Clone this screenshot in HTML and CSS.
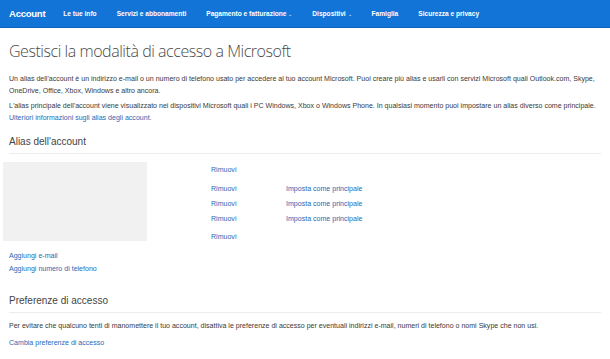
FILE: index.html
```html
<!DOCTYPE html>
<html lang="it">
<head>
<meta charset="utf-8">
<title>Account Microsoft</title>
<link rel="stylesheet" href="styles.css">
</head>
<body>
<header class="topbar">
  <span class="brand">Account</span>
  <nav class="nav">
    <a class="nav-item">Le tue info</a>
    <a class="nav-item">Servizi e abbonamenti</a>
    <a class="nav-item">Pagamento e fatturazione <span class="caret">⌄</span></a>
    <a class="nav-item">Dispositivi <span class="caret">⌄</span></a>
    <a class="nav-item">Famiglia</a>
    <a class="nav-item">Sicurezza e privacy</a>
  </nav>
</header>
<main class="content">
  <h1 class="title">Gestisci la modalità di accesso a Microsoft</h1>
  <p class="text">Un alias dell'account è un indirizzo e-mail o un numero di telefono usato per accedere al tuo account Microsoft. Puoi creare più alias e usarli con servizi Microsoft quali Outlook.com, Skype, OneDrive, Office, Xbox, Windows e altro ancora.</p>
  <p class="text">L'alias principale dell'account viene visualizzato nei dispositivi Microsoft quali i PC Windows, Xbox o Windows Phone. In qualsiasi momento puoi impostare un alias diverso come principale.<br><a class="link">Ulteriori informazioni sugli alias degli account.</a></p>

  <h2 class="section-title first">Alias dell'account</h2>
  <div class="alias-area">
    <div class="alias-box"></div>
    <div class="alias-actions">
      <div class="action-row top"><a class="link">Rimuovi</a></div>
      <div class="action-row"><a class="link">Rimuovi</a><a class="link">Imposta come principale</a></div>
      <div class="action-row"><a class="link">Rimuovi</a><a class="link">Imposta come principale</a></div>
      <div class="action-row"><a class="link">Rimuovi</a><a class="link">Imposta come principale</a></div>
      <div class="action-row bottom"><a class="link">Rimuovi</a></div>
    </div>
  </div>
  <div class="add-links">
    <a class="link">Aggiungi e-mail</a>
    <a class="link">Aggiungi numero di telefono</a>
  </div>

  <h2 class="section-title">Preferenze di accesso</h2>
  <p class="text">Per evitare che qualcuno tenti di manomettere il tuo account, disattiva le preferenze di accesso per eventuali indirizzi e-mail, numeri di telefono o nomi Skype che non usi.</p>
  <a class="link pref-link">Cambia preferenze di accesso</a>
</main>
</body>
</html>
```
FILE: styles.css
```css
* { box-sizing: border-box; }
html, body { margin: 0; padding: 0; background: #fff; }
body {
  font-family: "Liberation Sans", Arial, sans-serif;
  color: #3a3a3a;
  width: 610px;
  height: 359px;
  overflow: hidden;
}
.topbar {
  height: 28px;
  background: #1274d6;
  border-bottom: 1px solid #0f63b8;
  display: flex;
  align-items: center;
  padding-left: 9px;
  color: #fff;
}
.brand {
  font-size: 9.6px;
  font-weight: bold;
  letter-spacing: -0.3px;
  margin-right: 18px;
}
.nav { display: flex; align-items: center; }
.nav-item {
  font-size: 6.6px;
  font-weight: bold;
  margin-right: 20px;
  white-space: nowrap;
}
.caret { font-weight: normal; font-size: 5px; }
.content { padding: 0 9px; }
.title {
  font-weight: 300;
  font-family: "Open Sans", "Liberation Sans", sans-serif;
  font-size: 16px;
  color: #4a4a4a;
  margin: 12px 0 11px;
  letter-spacing: -0.45px;
}
.text {
  font-size: 7.05px;
  line-height: 12px;
  margin: 0 0 3px;
  color: #3a3a3a;
}
.text .link { display: inline-block; line-height: 11px; }
.link { color: #2a69b4; text-decoration: none; }
.section-title {
  font-weight: normal;
  font-size: 10px;
  color: #444;
  margin: 12px 0 0;
  padding-bottom: 6px;
  border-bottom: 1px solid #ececec;
}
.alias-area {
  display: flex;
  margin-top: 8px;
  margin-left: -6px;
  height: 79px;
}
.alias-box {
  width: 144px;
  height: 79px;
  background: #f1f1f1;
}
.alias-actions {
  margin-left: 64px;
  display: flex;
  flex-direction: column;
  font-size: 7.05px;
}
.action-row { display: flex; height: 15px; align-items: center; }
.action-row.top { height: 14px; margin-bottom: 5px; }
.action-row.bottom { height: 14px; align-items: flex-end; }
.action-row .link:first-child { width: 75px; }
.add-links {
  display: flex;
  flex-direction: column;
  font-size: 7.05px;
  gap: 6px;
  margin-top: 11px;
}
.add-links + .section-title { margin-top: 23px; }
.section-title + .text { margin-top: 7px; }
.pref-link { display: block; font-size: 7.05px; margin-top: 7px; }
```
